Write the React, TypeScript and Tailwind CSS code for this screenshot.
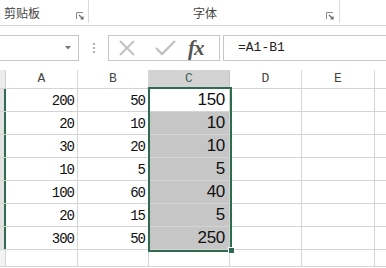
import React from "react";

const GREEN = "#2e6b4f";

const rows = [
  { a: "200", b: "50", c: "150" },
  { a: "20", b: "10", c: "10" },
  { a: "30", b: "20", c: "10" },
  { a: "10", b: "5", c: "5" },
  { a: "100", b: "60", c: "40" },
  { a: "20", b: "15", c: "5" },
  { a: "300", b: "50", c: "250" },
];

const Launcher = () => (
  <svg width="8" height="8" viewBox="0 0 8 8" className="shrink-0">
    <path d="M0.5 7V0.5H7" fill="none" stroke="#8a8a8a" strokeWidth="1" />
    <path d="M3 3L7 7M7 4.5V7H4.5" fill="none" stroke="#6a6a6a" strokeWidth="1.2" />
  </svg>
);

const App = () => {
  return (
    <div className="w-[386px] h-[268px] overflow-hidden bg-white relative font-['Liberation_Sans','Noto_Sans_CJK_SC',sans-serif]">
      {/* ribbon group labels */}
      <div className="flex h-[26px] border-b border-[#d5d5d5]">
        <div className="w-[89px] border-r border-[#dadada] flex items-end justify-between pl-[4px] pr-[4px] pb-[3px] h-[23px]">
          <span className="text-[12px] leading-[14px] text-[#444] font-['Noto_Sans_CJK_SC',sans-serif]">剪贴板</span>
          <Launcher />
        </div>
        <div className="w-[251px] border-r border-[#dadada] flex items-end pl-[104px] pr-[5px] pb-[3px] h-[23px]">
          <span className="text-[12px] leading-[14px] text-[#444] font-['Noto_Sans_CJK_SC',sans-serif]">字体</span>
          <span className="ml-auto"><Launcher /></span>
        </div>
      </div>

      {/* formula bar */}
      <div className="flex items-center h-[44px] pt-[9px] pb-[9px]">
        <div className="w-[79px] h-[26px] border border-l-0 border-[#c6c6c6] flex items-center justify-end pr-[7px]">
          <svg width="6" height="4" viewBox="0 0 6 4">
            <path d="M0 0H6L3 3.5Z" fill="#777" />
          </svg>
        </div>
        <div className="w-[29px] flex flex-col items-center gap-[2px]">
          <span className="w-[2px] h-[2px] bg-[#b0b0b0]" />
          <span className="w-[2px] h-[2px] bg-[#b0b0b0]" />
          <span className="w-[2px] h-[2px] bg-[#b0b0b0]" />
        </div>
        <div className="w-[112px] h-[26px] border border-[#c6c6c6] flex items-center">
          <svg width="18" height="16" viewBox="0 0 18 16" className="ml-[9px]">
            <path d="M2 1L16 15M16 1L2 15" stroke="#c2c2c2" strokeWidth="2" fill="none" />
          </svg>
          <svg width="21" height="16" viewBox="0 0 21 16" className="ml-[19px]">
            <path d="M1 8L7 14L20 1" stroke="#c2c2c2" strokeWidth="2.4" fill="none" />
          </svg>
          <span className="ml-[12px] text-[21px] leading-[20px] italic font-bold text-[#555] font-['Liberation_Serif',serif] tracking-[-1px]">fx</span>
        </div>
        <div className="ml-[3px] flex-1 h-[26px] border border-r-0 border-[#c6c6c6] flex items-center pl-[14px]">
          <span className="text-[13px] text-[#222] font-['Liberation_Mono',monospace]">=A1-B1</span>
        </div>
      </div>

      {/* grid */}
      <div className="relative">
        <div className="flex h-[19px] border-b border-[#d4d4d4] text-[13px] text-[#444] font-['Liberation_Mono',monospace]">
          <div className="w-[6px] bg-[#ececec] border-r border-[#cfcfcf]" />
          <div className="w-[72px] border-r border-[#d9d9d9] flex items-center justify-center">A</div>
          <div className="w-[71px] border-r border-[#d9d9d9] flex items-center justify-center">B</div>
          <div className="w-[81px] bg-[#d3d3d3] border-r border-[#c4c4c4] flex items-center justify-center text-[#3d6a55]">C</div>
          <div className="w-[72px] border-r border-[#d9d9d9] flex items-center justify-center">D</div>
          <div className="w-[73px] border-r border-[#d9d9d9] flex items-center justify-center">E</div>
          <div className="flex-1" />
        </div>

        {rows.map((r, i) => (
          <div key={i} className="flex h-[23px] border-b border-[#d4d4d4]">
            <div className="w-[6px] bg-[#e2e2e2] border-r-2 border-[#2e6b4f]" />
            <div className="w-[72px] border-r border-[#d4d4d4] flex items-end justify-end pr-[3px] pb-[3px] text-[14px] leading-[14px] tracking-[-1px] text-[#111] font-['Liberation_Mono',monospace]">
              {r.a}
            </div>
            <div className="w-[71px] border-r border-[#d4d4d4] flex items-end justify-end pr-[3px] pb-[3px] text-[14px] leading-[14px] tracking-[-1px] text-[#111] font-['Liberation_Mono',monospace]">
              {r.b}
            </div>
            <div
              className={`w-[81px] border-r border-[#d4d4d4] flex items-end justify-end pr-[4px] pb-[3px] text-[17px] leading-[17px] tracking-[-0.3px] text-[#111] ${
                i === 0 ? "bg-white" : "bg-[#c6c6c6]"
              }`}
            >
              {r.c}
            </div>
            <div className="w-[72px] border-r border-[#d4d4d4]" />
            <div className="w-[73px] border-r border-[#d4d4d4]" />
            <div className="flex-1" />
          </div>
        ))}

        <div className="flex h-[17px] border-b border-[#d4d4d4]">
          <div className="w-[6px] bg-[#f3f3f3] border-r border-[#d4d4d4]" />
          <div className="w-[72px] border-r border-[#d4d4d4]" />
          <div className="w-[71px] border-r border-[#d4d4d4]" />
          <div className="w-[81px] border-r border-[#d4d4d4]" />
          <div className="w-[72px] border-r border-[#d4d4d4]" />
          <div className="w-[73px] border-r border-[#d4d4d4]" />
          <div className="flex-1" />
        </div>

        {/* selection overlay */}
        <div
          className="absolute left-[148px] top-[17px] w-[84px] h-[165px] border-2 pointer-events-none"
          style={{ borderColor: GREEN }}
        />
        <div className="absolute left-[228px] top-[177px] w-[7px] h-[7px] bg-[#2e6b4f] border border-white" />
      </div>
    </div>
  );
};

export default App;
